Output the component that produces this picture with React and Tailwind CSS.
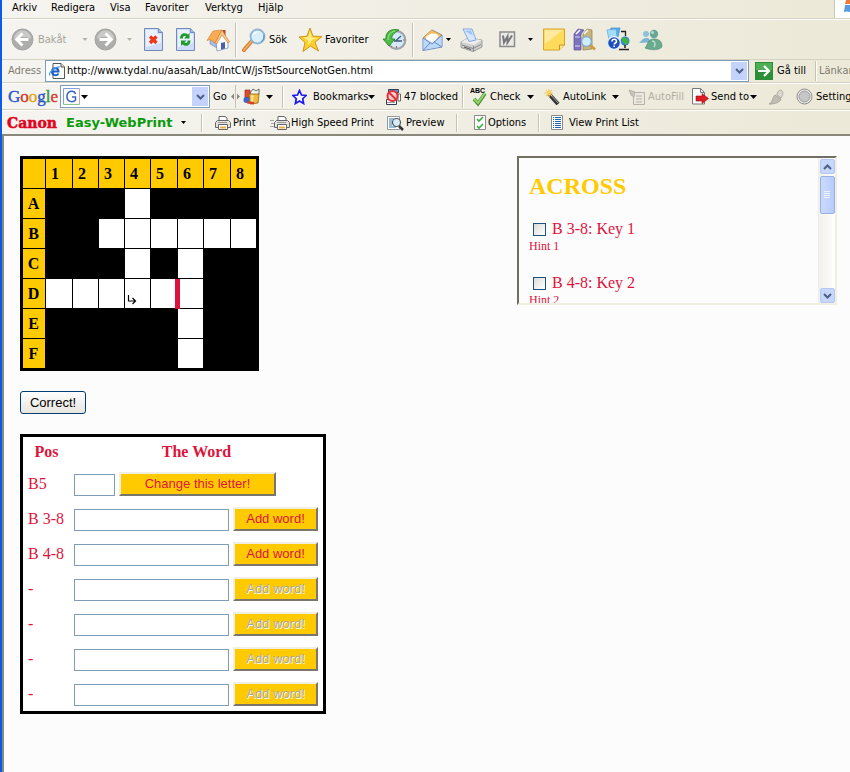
import React, { useState } from 'react';

const COLUMNS = ['1', '2', '3', '4', '5', '6', '7', '8'];

const GRID = [
  { name: 'A', cells: '...#....' },
  { name: 'B', cells: '..######' },
  { name: 'C', cells: '...#.#..' },
  { name: 'D', cells: '######..' },
  { name: 'E', cells: '.....#..' },
  { name: 'F', cells: '.....#..' },
];

const WORDS = ['B 3-8', 'B 4-8', '-', '-', '-', '-'];

const HINTS = [
  { id: 'key1', label: 'B 3-8: Key 1', hint: 'Hint 1' },
  { id: 'key2', label: 'B 4-8: Key 2', hint: 'Hint 2' },
];

const Arrow = ({ className = '', small = false }) => (
  <svg className={`shrink-0 ${className}`} width={small ? 5 : 7} height={small ? 3 : 4} viewBox="0 0 7 4">
    <path d="M0 0h7L3.5 4z" fill="currentColor" />
  </svg>
);

const Separator = ({ className = '' }) => (
  <span className={`w-[2px] shrink-0 border-l border-r border-l-[#c5c2b2] border-r-white ${className}`} />
);

const NavIcon = ({ flip }) => (
  <svg width="23" height="23" viewBox="0 0 23 23" className="shrink-0">
    <circle cx="11.5" cy="11.5" r="10.5" fill="#adadab" stroke="#a2a2a0" />
    <path d="M3 11a8.500 8.500 0 0 1 17 0c-4-3-13-3-17 0z" fill="#cacac8" />
    <g transform={flip ? 'translate(23 0) scale(-1 1)' : undefined}>
      <path d="M11.500 5.500l-6 6 6 6M6 11.500h11.500" fill="none" stroke="#fff" strokeWidth="2.800" />
    </g>
  </svg>
);

const Page = ({ children }) => (
  <svg width="19" height="23" viewBox="0 0 19 23" className="shrink-0">
    <path d="M.5 .5h14l4 4v18h-18z" fill="#cfdcf8" stroke="#7389bb" />
    <path d="M2 2h11v4h4v9l-15 4z" fill="#eaf1fe" />
    <path d="M14.500 .5v4h4" fill="#a9c0ee" stroke="#7389bb" />
    {children}
  </svg>
);

const HomeIcon = () => (
  <svg width="24" height="24" viewBox="0 0 24 24" className="shrink-0">
    <path d="M16.500 2h3v7h-3z" fill="#b04a30" />
    <path d="M4 12l7-6v14l-7-4z" fill="#a9bde8" stroke="#7185b5" strokeWidth=".6" />
    <path d="M10 13l6-7 6 7v7l-11 3z" fill="#f7faff" stroke="#7185b5" strokeWidth=".7" />
    <path d="M15 15l4-1v6.500l-4 1z" fill="#4c60a8" />
    <path d="M1 12.500L7 3l9-1-7 13-5-3.500z" fill="#f8ab52" stroke="#cf7a26" strokeWidth=".6" />
    <path d="M9 15L16 2l7.500 12-1.500 1-6-8-5.500 9z" fill="#f6c88b" stroke="#cf7a26" strokeWidth=".6" />
  </svg>
);

const SearchIcon = () => (
  <svg width="24" height="24" viewBox="0 0 24 24" className="shrink-0">
    <path d="M9 14l-7 8" stroke="#d07a2c" strokeWidth="4" strokeLinecap="round" />
    <path d="M9 14l-7 8" stroke="#f7b06a" strokeWidth="1.800" strokeLinecap="round" />
    <circle cx="15.500" cy="8.500" r="7" fill="#d8f0fb" stroke="#8fb4d6" strokeWidth="1.800" />
    <path d="M10.500 8a5 5 0 0 1 7-4c-3 0-5 2-7 4z" fill="#fff" />
    <path d="M19 14a7 7 0 0 0 3-7" fill="none" stroke="#5c86bd" />
  </svg>
);

const StarIcon = () => (
  <svg width="25" height="25" viewBox="0 0 25 25" className="shrink-0">
    <path d="M12 1l3 8.200 9 .3-7 5.800 3.500 8.700-8-5-7.500 5.500 2-9-6-5.500 8-.8z" fill="#fbd02e" stroke="#cf9418" strokeLinejoin="round" />
    <path d="M12 4l1.800 6.500 6 .5-6 2-3 5-1-5-5-2.500 5.500-.5z" fill="#ffee8a" />
  </svg>
);

const HistoryIcon = () => (
  <svg width="25" height="24" viewBox="0 0 25 24" className="shrink-0">
    <circle cx="14.500" cy="12" r="8.800" fill="#d5eaf8" stroke="#9aa3ae" strokeWidth="2.200" />
    <path d="M14 12.500l5-4.500M12 13h8" stroke="#3c5a80" strokeWidth="1.300" />
    <path d="M14.500 18v2M21 12h1.500M10 18l-1 1" stroke="#c9553c" />
    <path d="M17 2C9 0 3 4 4 11H1l6 7 6-7h-3c-1-3 2-6 7-9z" fill="#4fbd45" stroke="#1f7c22" strokeWidth=".8" />
    <path d="M13 3C8 4 6 7 6 12" fill="none" stroke="#a2e58c" />
  </svg>
);

const MailIcon = () => (
  <svg width="21" height="24" viewBox="0 0 21 24" className="shrink-0">
    <path d="M1 10l9-8 10 5v12L1 22.500z" fill="#b4d4f8" stroke="#6e88c6" />
    <path d="M1.500 9.500L9.500 2l10 5-3 3-11 1z" fill="#f6bd5e" stroke="#d49038" strokeWidth=".5" />
    <path d="M4 9c3-4 9-5 13-1l-6 7-7-4z" fill="#fffdf4" />
    <path d="M1.500 10.500l8 5L19.500 8v10.500L1.500 22z" fill="#b9dafa" />
    <path d="M1 10l9 6L20 7M1 22.500L8 15M20 19l-8-5" fill="none" stroke="#6e88c6" />
  </svg>
);

const PrinterIcon = () => (
  <svg width="23" height="24" viewBox="0 0 23 24" className="shrink-0">
    <path d="M1 14l7-4 14 2v7l-9 4.500-12-4z" fill="#cfcfce" stroke="#8a8a8c" strokeWidth=".8" />
    <path d="M1 14l7-4 14 2-8 5z" fill="#ececec" />
    <path d="M3 1h9l4 11-7 1.500z" fill="#d6e8ff" stroke="#7096da" strokeWidth=".8" />
    <path d="M5 3l6-.5 2 5z" fill="#9cc3f8" />
    <path d="M13.500 17.500v6M2 17l11 3.500 8-4" fill="none" stroke="#8a8a8c" />
    <path d="M4 19l7 2.500" stroke="#555" />
  </svg>
);

const WordIcon = () => (
  <svg width="17" height="17" viewBox="0 0 17 17" className="shrink-0">
    <path d="M1 1h14.500v14.500h-14.500z" fill="#e9e9e6" stroke="#8b8b8d" strokeWidth="1.500" />
    <path d="M4 4.500l1 7 3.500-6v6l4.500-7" fill="none" stroke="#77777a" strokeWidth="2" />
  </svg>
);

const NoteIcon = () => (
  <svg width="22" height="23" viewBox="0 0 22 23" className="shrink-0">
    <path d="M.5 1h21v16l-5 5h-16z" fill="#ffdb5c" stroke="#d6a42a" />
    <path d="M2 2h18L2 16z" fill="#ffeaa0" />
    <path d="M21.500 17h-5v5" fill="#ffe58b" stroke="#c9941c" />
  </svg>
);

const ResearchIcon = () => (
  <svg width="23" height="24" viewBox="0 0 23 24" className="shrink-0">
    <path d="M1 6l4-5 6 1-3 4v16h-7z" fill="#7d72bd" stroke="#5a4f9c" strokeWidth=".7" />
    <path d="M10 6l4-5 5 1v19l-9 1z" fill="#c9b67e" stroke="#8d7a48" strokeWidth=".7" />
    <path d="M2 9h5M2 18h5" stroke="#ddd6ff" />
    <path d="M3 6l4-4M11 6l4-4" stroke="#fff" strokeWidth="1.500" />
    <path d="M17 17l5 4.500" stroke="#d29a3c" strokeWidth="2.800" />
    <circle cx="13.500" cy="13.500" r="5" fill="#cdeffc" stroke="#8ba9c4" strokeWidth="1.500" />
  </svg>
);

const HelpIcon = () => (
  <svg width="24" height="25" viewBox="0 0 24 25" className="shrink-0">
    <path d="M5 1h9l-2 9H3z" fill="#57b2ee" stroke="#3d86c8" strokeWidth=".7" />
    <path d="M1 3l9-1 1 8-8 2z" fill="#a4dcfb" stroke="#5aa3dc" strokeWidth=".7" />
    <path d="M15 4.500h4.500V9" fill="none" stroke="#222" strokeWidth="1.300" />
    <circle cx="19" cy="14" r="4.500" fill="#2f80d8" />
    <path d="M16 11c2-2 4 0 6 1l1 3-4 3.500c0-3-4-3-3-7.500z" fill="#3fb344" />
    <path d="M19 18v3M13 22.500h10" stroke="#222" strokeWidth="1.500" />
    <circle cx="8" cy="16" r="6.500" fill="#1d50b8" stroke="#e3eefc" strokeWidth="1.400" />
    <path d="M6 14.500c0-3 4.500-3 4.500 0 0 1.500-2.300 1.500-2.300 3M8.200 18.500v1.500" fill="none" stroke="#fff" strokeWidth="1.600" />
  </svg>
);

const MessengerIcon = () => (
  <svg width="25" height="22" viewBox="0 0 25 22" className="shrink-0">
    <circle cx="8" cy="5" r="3" fill="#8cc2dc" />
    <path d="M1 14c2-1 3-5 7-5s4 2 5 5c-4-1-8 0-12 0z" fill="#7cb6d4" />
    <circle cx="16" cy="5" r="4.200" fill="#68a796" />
    <circle cx="14.500" cy="3.500" r="1.500" fill="#b5dccd" />
    <path d="M7 19c3-3 2-9 9-9s8 4 8 8c-4 4-12 3-17 1z" fill="#6aab8f" stroke="#4a8a70" strokeWidth=".6" />
    <path d="M14 12c3 0 4 3 2 6" fill="none" stroke="#b8e0c9" strokeWidth="1.500" />
  </svg>
);

const ExplorerIcon = () => (
  <svg width="16" height="16" viewBox="0 0 16 16" className="shrink-0">
    <path d="M4 .5h8l3.500 3.500v11.500h-11.500z" fill="#fff" stroke="#555" />
    <path d="M12 .5v3.500h3.500" fill="#ddd" stroke="#555" />
    <path d="M9.500 10.500c-1 2.500-6.500 2.500-6.500-2s6.500-4.500 6.500 0H3" fill="none" stroke="#1b5fc8" strokeWidth="2" />
    <path d="M1 12.500c-2-3 5-9 10-8.500" fill="none" stroke="#4a9af0" strokeWidth="1.200" />
  </svg>
);

const Chevron = ({ up }) => (
  <svg width="9" height="6" viewBox="0 0 9 6">
    <path d={up ? 'M1 5l3.500-3.500L8 5' : 'M1 1l3.500 3.500L8 1'} fill="none" stroke="#4d6185" strokeWidth="2" />
  </svg>
);

const DropButton = ({ label }) => (
  <button aria-label={label} className="flex w-4 shrink-0 items-center justify-center self-stretch bg-[#c3d3fc]">
    <Chevron />
  </button>
);

const SmallPrinter = ({ fast }) => (
  <svg width={fast ? 20 : 16} height="16" viewBox={fast ? '-4 0 20 16' : '0 0 16 16'} className="shrink-0">
    {fast && <path d="M-4 5.500h4M-3 8.500h3M-4 11.500h4" stroke="#a5a5a5" />}
    <path d="M4 5v-3.500h6l2 1.500v2" fill="#fff" stroke="#666" />
    <path d="M2.500 5.500h11l2 2v5h-15v-5z" fill="#e2e2de" stroke="#666" />
    <path d="M3.500 9.500h9v5h-9z" fill="#fff" stroke="#666" />
    <path d="M5 12.500h6" stroke="#e9ac4c" strokeWidth="2" />
    <path d="M3 7.500h9" stroke="#999" />
  </svg>
);

const MenuBar = () => (
  <nav className="flex h-[19px] items-start border-b border-[#d5d2c2] pt-px pl-[10px]">
    <button className="w-[39px] shrink-0 text-left">Arkiv</button>
    <button className="w-[59px] shrink-0 text-left">Redigera</button>
    <button className="w-[35px] shrink-0 text-left">Visa</button>
    <button className="w-[60px] shrink-0 text-left">Favoriter</button>
    <button className="w-[53px] shrink-0 text-left">Verktyg</button>
    <button className="shrink-0 text-left">Hjälp</button>
    <span className="-mt-px ml-auto flex h-[18px] w-4 shrink-0 justify-end border-l border-[#c9c6b6] bg-white">
      <svg width="6" height="14" viewBox="0 0 6 14">
        <path d="M2 0h4v4l-5 0z" fill="#ee7a35" />
        <path d="M1 5h5v7q-3-1-6 0z" fill="#5a9be0" />
      </svg>
    </span>
  </nav>
);

const ToolBar = () => (
  <div className="flex h-[41px] items-center border-t border-t-white border-b border-b-[#d5d2c2] pl-[9px]">
    <button className="flex w-[65px] shrink-0 items-center gap-1 text-[#a5a397]"><NavIcon />Bakåt</button>
    <Arrow small className="w-[18px] text-[#b5b3a8]" />
    <button aria-label="Framåt" className="flex w-[33px] shrink-0"><NavIcon flip /></button>
    <Arrow small className="mr-3 text-[#b5b3a8]" />
    <button aria-label="Stopp" className="w-8 shrink-0">
      <Page><path d="M6 8.500l6.500 6.500M12.500 8.500L6 15" stroke="#f0371c" strokeWidth="3.400" /></Page>
    </button>
    <button aria-label="Uppdatera" className="w-[30px] shrink-0">
      <Page>
        <path d="M4 10.500C4 5 9 4 12 6.500l1.500-1.500v5.500h-5.500l2-2C8 7.500 6.500 8.500 7 10.500z" fill="#1f9a2c" />
        <path d="M14.500 12.500c0 5.500-5 6.500-8 4L5 18v-5.500h5.500l-2 2c2 1 3.500 0 3-2z" fill="#1f9a2c" />
      </Page>
    </button>
    <button aria-label="Hem" className="w-[29px] shrink-0"><HomeIcon /></button>
    <Separator className="mr-[5px] h-[34px]" />
    <button className="flex w-[56px] shrink-0 items-center gap-[3px]"><SearchIcon />Sök</button>
    <button className="flex w-[84px] shrink-0 items-center gap-[2px]"><StarIcon />Favoriter</button>
    <button aria-label="Tidigare" className="w-[30px] shrink-0"><HistoryIcon /></button>
    <Separator className="mr-2 h-[34px]" />
    <button aria-label="E-post" className="flex w-[38px] shrink-0 items-center gap-[3px]"><MailIcon /><Arrow small /></button>
    <button aria-label="Skriv ut" className="w-[39px] shrink-0"><PrinterIcon /></button>
    <button aria-label="Redigera med Word" className="flex w-[44px] shrink-0 items-center gap-3"><WordIcon /><Arrow small /></button>
    <button aria-label="Anteckning" className="w-[30px] shrink-0"><NoteIcon /></button>
    <button aria-label="Referens" className="w-[33px] shrink-0"><ResearchIcon /></button>
    <button aria-label="Hjälp" className="w-8 shrink-0"><HelpIcon /></button>
    <button aria-label="Messenger" className="shrink-0"><MessengerIcon /></button>
  </div>
);

const AddressBar = () => {
  const [url, setUrl] = useState('http://www.tydal.nu/aasah/Lab/IntCW/jsTstSourceNotGen.html');

  return (
    <div className="flex h-[23px] items-center border-b border-[#d5d2c2] pl-[6px]">
      <label htmlFor="address" className="w-[37px] shrink-0 text-[#7f7d72]">Adress</label>
      <div className="flex h-[22px] min-w-0 flex-1 items-center border border-[#7f9db9] bg-white p-px">
        <span className="mx-[2px]"><ExplorerIcon /></span>
        <input id="address" type="text" value={url} onChange={(e) => setUrl(e.target.value)} className="min-w-0 flex-1 outline-none" />
        <DropButton label="Visa adresser" />
      </div>
      <button className="ml-[6px] flex w-[60px] shrink-0 items-center gap-1">
        <svg width="18" height="18" viewBox="0 0 18 18" className="shrink-0">
          <path d="M0 0h18v18h-18z" fill="#2c8f37" />
          <path d="M1 1h16v7h-16z" fill="#4eae55" />
          <path d="M3 9h11M9 4l5 5-5 5" fill="none" stroke="#fff" strokeWidth="2.200" />
        </svg>
        Gå till
      </button>
      <Separator className="mr-[2px] h-5" />
      <span className="w-[31px] shrink-0 overflow-hidden whitespace-nowrap text-[#7f7d72]">Länkar</span>
    </div>
  );
};

const GoogleBar = () => (
  <div className="flex h-[27px] items-center border-t border-t-white border-b border-b-[#d5d2c2] pl-[6px]">
    <span className="w-[52px] shrink-0 font-['Liberation_Serif',serif] text-[17px] leading-5 font-normal [-webkit-text-stroke:0.4px]">
      <span className="text-[#2a56c6]">G</span>
      <span className="text-[#d33a2c]">o</span>
      <span className="text-[#dfa816]">o</span>
      <span className="text-[#2a56c6]">g</span>
      <span className="text-[#2f9a44]">l</span>
      <span className="text-[#d33a2c]">e</span>
    </span>
    <div className="mr-[3px] flex h-[23px] w-[150px] shrink-0 items-center border border-[#7f9db9] bg-white p-px">
      <svg width="17" height="17" viewBox="0 0 17 17" className="ml-px shrink-0">
        <path d="M.5 16.500v-16h16" fill="none" stroke="#7f9fe0" />
        <path d="M16.500 .5v16" fill="none" stroke="#e0a0a0" />
        <path d="M.5 16.500h16" fill="none" stroke="#8cc98c" />
        <path d="M12.500 6c-1-4-8-4-8.500 2s6 7 8.500 4v-3h-3.500" fill="none" stroke="#3b63c4" strokeWidth="1.500" />
      </svg>
      <Arrow className="ml-px" />
      <input type="text" aria-label="Google search" className="min-w-0 flex-1 outline-none" />
      <DropButton label="Search history" />
    </div>
    <button className="w-[18px] shrink-0 text-left">Go</button>
    <svg width="9" height="23" viewBox="0 0 9 23" className="mr-[3px] shrink-0">
      <path d="M4.500 0v23" stroke="#c5c2b2" />
      <path d="M3 8.500v6l-3-3zM6 8.500v6l3-3z" fill="#8d8b80" />
    </svg>
    <button aria-label="Google tools" className="flex w-[39px] shrink-0 items-center gap-[6px]">
      <svg width="17" height="17" viewBox="0 0 17 17" className="shrink-0">
        <path d="M7 5l3-4 3 2 3-2v5l-3 2H8z" fill="#f4f4f0" stroke="#444" strokeWidth=".8" />
        <path d="M2 2h5v8h-5z" fill="#e04a2e" stroke="#8b1d10" strokeWidth=".6" />
        <path d="M6 6h10l-1 9-8 1z" fill="#f3b83c" stroke="#8e6112" strokeWidth=".8" />
        <path d="M8 7h3l-1 7h-2z" fill="#fbe08f" />
        <circle cx="3.500" cy="12" r="3" fill="#3468cf" />
        <path d="M4 13l7 1v2.500l-7-1z" fill="#d5402a" />
      </svg>
      <Arrow />
    </button>
    <Separator className="mr-2 h-[22px]" />
    <button className="flex w-[93px] shrink-0 items-center">
      <svg width="15" height="16" viewBox="0 0 15 16" className="mr-[6px] shrink-0">
        <path d="M7.500 1.500l2 4.500 4.500.5-3.300 3.200.9 4.800-4.100-2.500-4.100 2.500.9-4.800L1 6.500 5.500 6z" fill="#fff" stroke="#1a1af0" strokeWidth="1.700" />
      </svg>
      <span className="w-[55px] shrink-0 text-left">Bookmarks</span>
      <Arrow />
    </button>
    <button className="flex w-[77px] shrink-0 items-center gap-[3px] whitespace-nowrap">
      <svg width="16" height="16" viewBox="0 0 16 16" className="shrink-0">
        <path d="M3.500 .5h10v3h-10z" fill="#5d95dc" stroke="#333c55" />
        <path d="M1.500 10.500h10v5h-10z" fill="#fff" stroke="#333c55" />
        <path d="M13 5h2.500v7h-2.500z" fill="#fff" stroke="#444" strokeWidth=".8" />
        <path d="M2 13.500h8" stroke="#999" />
        <circle cx="7.500" cy="7" r="5" fill="#fbd0cd" stroke="#e0303a" strokeWidth="2" />
        <path d="M4 3.500l7 7" stroke="#e0303a" strokeWidth="2" />
      </svg>
      47 blocked
    </button>
    <Separator className="mr-[6px] h-[22px]" />
    <button className="flex w-[74px] shrink-0 items-center">
      <svg width="18" height="20" viewBox="0 0 18 20" className="mr-[2px] shrink-0">
        <text x="0" y="6" fontSize="7" fontWeight="bold" fontFamily="Liberation Sans">ABC</text>
        <path d="M4 12l4 4.500 7-10" fill="none" stroke="#4a8a30" strokeWidth="3.600" />
        <path d="M4 12l4 4 7-10" fill="none" stroke="#94d86c" strokeWidth="2" />
      </svg>
      <span className="w-[37px] shrink-0 text-left">Check</span>
      <Arrow />
    </button>
    <button className="flex w-[85px] shrink-0 items-center">
      <svg width="16" height="16" viewBox="0 0 16 16" className="mr-[3px] shrink-0">
        <path d="M5 5l9 10" stroke="#333" strokeWidth="4" />
        <path d="M7 6l7 8" stroke="#aaa" />
        <path d="M5 0v8M0 4h9M2 1l6 6M8 1L2 7" stroke="#f7cf62" strokeWidth="1.200" />
      </svg>
      <span className="w-[49px] shrink-0 text-left">AutoLink</span>
      <Arrow />
    </button>
    <button className="flex w-[63px] shrink-0 items-center gap-[3px] text-[#b0aea2]">
      <svg width="16" height="16" viewBox="0 0 16 16" className="shrink-0" fill="none" stroke="#b5b3a9">
        <path d="M4.500 3.500h11v12h-11z" fill="#eceadf" />
        <path d="M7 7h6M7 10h6M7 13h6" />
        <path d="M0 1l6 2-1 5-3-2z" fill="#c7c5ba" />
      </svg>
      AutoFill
    </button>
    <button className="flex w-[76px] shrink-0 items-center">
      <svg width="17" height="17" viewBox="0 0 17 17" className="mr-[2px] shrink-0">
        <path d="M.5 .5h8l4 4v11.500h-12z" fill="#fff" stroke="#77767a" />
        <path d="M8.500 .5v4h4" fill="none" stroke="#77767a" />
        <path d="M4 8h6v-2.500l6.500 5-6.500 5v-2.500h-6z" fill="#e01b24" stroke="#8b1016" strokeWidth=".6" />
      </svg>
      <span className="w-[39px] shrink-0 whitespace-nowrap text-left">Send to</span>
      <Arrow />
    </button>
    <button aria-label="Highlight" className="w-7 shrink-0">
      <svg width="16" height="16" viewBox="0 0 16 16">
        <path d="M13 1c3 2 2 5 0 8l-4-3c0-3 2-5 4-5z" fill="#dbd9cf" stroke="#b0aea4" />
        <path d="M7 6l6 4c-1 3-5 5-12 5 4-2 3-6 6-9z" fill="#bfbdb4" stroke="#aaa89e" />
      </svg>
    </button>
    <button className="flex min-w-0 flex-1 items-center gap-[3px] overflow-hidden">
      <svg width="17" height="17" viewBox="0 0 17 17" className="shrink-0">
        <circle cx="8.500" cy="8.500" r="7.500" fill="#f1f1ef" stroke="#88888a" />
        <circle cx="8.500" cy="8.500" r="5.500" fill="#c6c6c7" stroke="#999" />
      </svg>
      Setting
    </button>
  </div>
);

const CanonBar = () => (
  <div className="flex h-6 items-center border-t border-t-white pl-[5px]">
    <span className="w-[59px] shrink-0 font-['DejaVu_Serif',serif] text-[14px] leading-5 font-bold text-[#e0041c] [-webkit-text-stroke:0.5px]">Canon</span>
    <button className="flex w-[135px] shrink-0 items-center">
      <span className="w-[115px] text-left font-['DejaVu_Sans',sans-serif] text-[13px] font-bold whitespace-nowrap text-[#0a9a0a]">Easy-WebPrint</span>
      <Arrow small />
    </button>
    <Separator className="mr-3 h-[18px]" />
    <button className="flex w-[55px] shrink-0 items-center gap-[2px]"><SmallPrinter />Print</button>
    <button className="flex w-[117px] shrink-0 items-center gap-px whitespace-nowrap"><SmallPrinter fast />High Speed Print</button>
    <button className="flex w-[69px] shrink-0 items-center gap-[2px]">
      <svg width="17" height="16" viewBox="0 0 17 16" className="shrink-0">
        <path d="M.5 1.500h12v13h-12z" fill="#fff" stroke="#999" />
        <path d="M2 4h5M2 6h3M2 8h3M2 10h3M2 12h7" stroke="#2b7cb0" />
        <path d="M12 11l4 4" stroke="#333" strokeWidth="2.500" />
        <circle cx="9.500" cy="7.500" r="4" fill="#d8ecf8" stroke="#555" strokeWidth="1.200" />
      </svg>
      Preview
    </button>
    <Separator className="mr-[16px] h-[18px]" />
    <button className="flex w-[64px] shrink-0 items-center gap-[2px]">
      <svg width="12" height="15" viewBox="0 0 12 15" className="shrink-0">
        <path d="M.5 .5h11v14h-11z" fill="#fff" stroke="#8a8a8a" />
        <path d="M3 4l2 2 4-4M3 11l2 2 4-4" fill="none" stroke="#35b03a" strokeWidth="1.600" />
      </svg>
      Options
    </button>
    <Separator className="mr-[11px] h-[18px]" />
    <button className="flex shrink-0 items-center gap-[6px] whitespace-nowrap">
      <svg width="12" height="15" viewBox="0 0 12 15" className="shrink-0">
        <path d="M.5 .5h11v14h-11z" fill="#fff" stroke="#8a8a8a" />
        <path d="M4 2.500h6M4 4.500h6M4 6.500h6M4 8.500h6M4 10.500h6M4 12.500h6" stroke="#1f5fb4" />
        <path d="M2 2.500h1M2 4.500h1M2 6.500h1M2 8.500h1M2 10.500h1M2 12.500h1" stroke="#1f5fb4" />
      </svg>
      View Print List
    </button>
  </div>
);

const Crossword = () => (
  <table className="w-[239px] table-fixed border-separate border-spacing-px border-2 border-black bg-black font-bold">
    <colgroup>
      <col className="w-[22px]" />
      <col className="w-[26px]" />
      <col className="w-[25px]" />
      <col className="w-[25px]" />
      <col className="w-[25px]" />
      <col className="w-[26px]" />
      <col className="w-[25px]" />
      <col className="w-[26px]" />
      <col className="w-[25px]" />
    </colgroup>
    <thead>
      <tr className="h-[29px]">
        <td className="bg-[#ffcb00]" />
        {COLUMNS.map((c) => (
          <th key={c} scope="col" className="bg-[#ffcb00] p-0 pl-[5px] text-left">{c}</th>
        ))}
      </tr>
    </thead>
    <tbody>
      {GRID.map((row) => (
        <tr key={row.name} className="h-[29px]">
          <th scope="row" className="bg-[#ffcb00] p-0 pr-px text-center">{row.name}</th>
          {row.cells.split('').map((cell, i) => (
            <td key={i} className={cell === '#' ? 'relative bg-white p-0' : 'bg-black p-0'}>
              {row.name === 'D' && i === 3 && (
                <svg width="10" height="11" viewBox="0 0 10 11" className="mt-3 ml-[2px]">
                  <path d="M1.500 1v6h6M5.500 4l3 3-3 3" fill="none" stroke="#000" strokeWidth="1.200" />
                </svg>
              )}
              {row.name === 'D' && i === 5 && (
                <span className="absolute top-0 -left-[3px] h-[30px] w-[5px] bg-[#dc143c]" />
              )}
            </td>
          ))}
        </tr>
      ))}
    </tbody>
  </table>
);

const YellowButton = ({ className, disabled, children }) => (
  <button
    disabled={disabled}
    className={`h-6 border-2 border-t-[#f1efe2] border-r-[#7a766c] border-b-[#7a766c] border-l-[#f1efe2] bg-[#ffcb00] font-['Liberation_Sans',Arial,sans-serif] text-[13px] leading-4 text-[#dc143c] disabled:text-[#aca899] disabled:[text-shadow:1px_1px_0_#fff] ${className}`}
  >
    {children}
  </button>
);

const WordForm = () => (
  <table className="w-[306px] border-separate border-spacing-0 border-[3px] border-black bg-white text-[#dc143c]">
    <thead>
      <tr className="h-[29px]">
        <th className="w-[47px] p-0">Pos</th>
        <th className="p-0">The Word</th>
      </tr>
    </thead>
    <tbody>
      <tr className="h-[35px]">
        <td className="p-0 pl-[5px]"><label htmlFor="letter">B5</label></td>
        <td className="p-0 pl-1">
          <div className="flex items-end gap-1">
            <input id="letter" type="text" className="h-[22px] w-[41px] border border-[#7f9db9] bg-white px-1" />
            <YellowButton className="w-[157px]">Change this letter!</YellowButton>
          </div>
        </td>
      </tr>
      {WORDS.map((w, i) => (
        <tr key={i} className="h-[35px]">
          <td className="p-0 pl-[5px]"><label htmlFor={`word${i}`}>{w}</label></td>
          <td className="p-0 pl-1">
            <div className="flex items-end gap-1">
              <input id={`word${i}`} type="text" className="h-[22px] w-[155px] border border-[#7f9db9] bg-white px-1" />
              <YellowButton className="w-[85px]" disabled={w === '-'}>Add word!</YellowButton>
            </div>
          </td>
        </tr>
      ))}
    </tbody>
  </table>
);

const HintPanel = () => (
  <section className="flex h-[149px] w-[320px] border-2 border-t-[#716f64] border-r-[#f1efe2] border-b-[#f1efe2] border-l-[#716f64]">
    <div className="flex-1 overflow-hidden pl-[10px] text-[#dc143c]">
      <h2 className="mt-[14px] mb-5 text-2xl leading-7 font-bold text-[#ffcb00]">ACROSS</h2>
      {HINTS.map((h) => (
        <div key={h.id} className="mb-5">
          <label className="flex h-[18px] items-center gap-[6px] pl-1">
            <input type="checkbox" className="h-[13px] w-[13px] appearance-none border border-[#1c5180] bg-linear-to-br from-[#dcdcd7] to-white checked:bg-[#21a121]" />
            {h.label}
          </label>
          <p className="text-xs leading-4">{h.hint}</p>
        </div>
      ))}
    </div>
    <div className="flex w-[17px] flex-col items-center gap-[2px] border-l border-[#eeede5] bg-linear-to-r from-[#f3f1ec] to-[#fefefb] pt-px">
      <button aria-label="Scroll up" className="flex h-[15px] w-[15px] items-center justify-center rounded-xs border border-[#b4c8f6] bg-[#c7d6fb]"><Chevron up /></button>
      <span className="flex h-[38px] w-[15px] items-center justify-center rounded-xs border border-[#98b1e4] bg-linear-to-r from-[#cbdafd] to-[#b8cbfa]">
        <svg width="7" height="8" viewBox="0 0 7 8"><path d="M0 .5h6M0 2.500h6M0 4.500h6M0 6.500h6" stroke="#eef4fe" /></svg>
      </span>
      <button aria-label="Scroll down" className="mt-auto flex h-[15px] w-[15px] items-center justify-center rounded-xs border border-[#b4c8f6] bg-[#c7d6fb]"><Chevron /></button>
    </div>
  </section>
);

export default function App() {
  return (
    <div className="flex min-h-screen flex-col overflow-hidden border-l-2 border-[#0a5be8] bg-[#fcfcfc]">
      <header className="bg-linear-to-r from-[#f5f4f0] to-[#ece9d8] font-['DejaVu_Sans_Condensed','DejaVu_Sans',Tahoma,sans-serif] text-[11px] leading-[14px] text-black">
        <MenuBar />
        <ToolBar />
        <AddressBar />
        <GoogleBar />
        <CanonBar />
      </header>
      <main className="flex flex-1 items-start justify-between border-t-2 border-l-2 border-[#8a887a] pt-5 pr-[13px] pl-4 font-['Liberation_Serif','Times_New_Roman',serif] text-base leading-5">
        <div className="flex flex-col items-start gap-5">
          <Crossword />
          <button className="h-[23px] w-[66px] rounded-[3px] border border-[#003c74] bg-linear-to-b from-white to-[#e6e5df] font-['Liberation_Sans',Arial,sans-serif] text-[13px] leading-4 text-black">
            Correct!
          </button>
          <WordForm />
        </div>
        <HintPanel />
      </main>
    </div>
  );
}
